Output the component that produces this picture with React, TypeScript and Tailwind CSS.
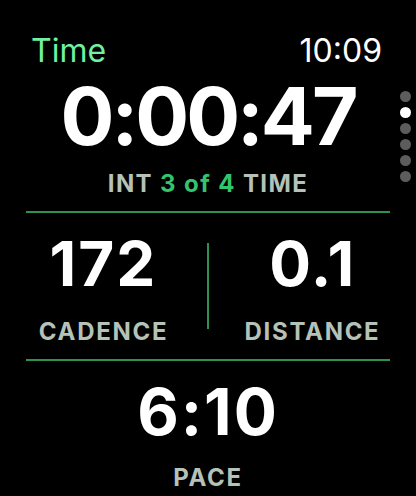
import React from "react";

export default function App() {
  return (
    <div
      className="relative w-[416px] h-[496px] bg-black overflow-hidden text-white"
      style={{ fontFamily: "Inter, 'Noto Sans', sans-serif" }}
    >
      <div className="flex flex-col">
        <div className="flex justify-between items-end h-[68px] pl-[31px] pr-[34px] pb-[1px]">
          <span className="text-[32px] leading-none text-[#70f0a0]">Time</span>
          <span className="text-[32px] leading-none text-white">10:09</span>
        </div>
        <div className="flex justify-center h-[96px] items-center">
          <span className="text-[80px] font-bold leading-none tracking-[-3px]">0:00:47</span>
        </div>
        <div className="flex justify-center h-[38px] pt-[8px] items-start text-[24px] font-bold leading-none tracking-[1.4px] text-[#b5c2b7]">
          <span>
            INT <span className="text-[#34c46c]">3 of 4</span> TIME
          </span>
        </div>
        <div className="h-[2px] bg-[#2e9150] mt-[9px] mx-[26px]" />
        <div className="flex h-[146px]">
          <div className="flex-1 flex flex-col items-center">
            <span className="mt-[20px] text-[62px] font-bold leading-none tracking-[2px]">172</span>
            <span className="mt-[25px] text-[24px] font-bold leading-none tracking-[1.7px] text-[#b5c2b7]">CADENCE</span>
          </div>
          <div className="w-[2px] bg-[#2e9150] mt-[30px] h-[86px]" />
          <div className="flex-1 flex flex-col items-center">
            <span className="mt-[20px] text-[62px] font-bold leading-none tracking-[1.5px]">0.1</span>
            <span className="mt-[25px] text-[24px] font-bold leading-none tracking-[1.7px] text-[#b5c2b7]">DISTANCE</span>
          </div>
        </div>
        <div className="h-[2px] bg-[#2e9150] mx-[26px]" />
        <div className="flex flex-col items-center">
          <span className="mt-[19px] text-[64px] font-bold leading-none tracking-[2px]">6:10</span>
          <span className="mt-[22px] text-[24px] font-bold leading-none tracking-[1.7px] text-[#b5c2b7]">PACE</span>
        </div>
      </div>
      <div className="absolute right-[5px] top-[91px] flex flex-col gap-[5px]">
        <div className="w-[11px] h-[11px] rounded-full bg-[#5c5c5c]" />
        <div className="w-[11px] h-[11px] rounded-full bg-white" />
        <div className="w-[11px] h-[11px] rounded-full bg-[#5c5c5c]" />
        <div className="w-[11px] h-[11px] rounded-full bg-[#5c5c5c]" />
        <div className="w-[11px] h-[11px] rounded-full bg-[#5c5c5c]" />
        <div className="w-[11px] h-[11px] rounded-full bg-[#5c5c5c]" />
      </div>
    </div>
  );
}
